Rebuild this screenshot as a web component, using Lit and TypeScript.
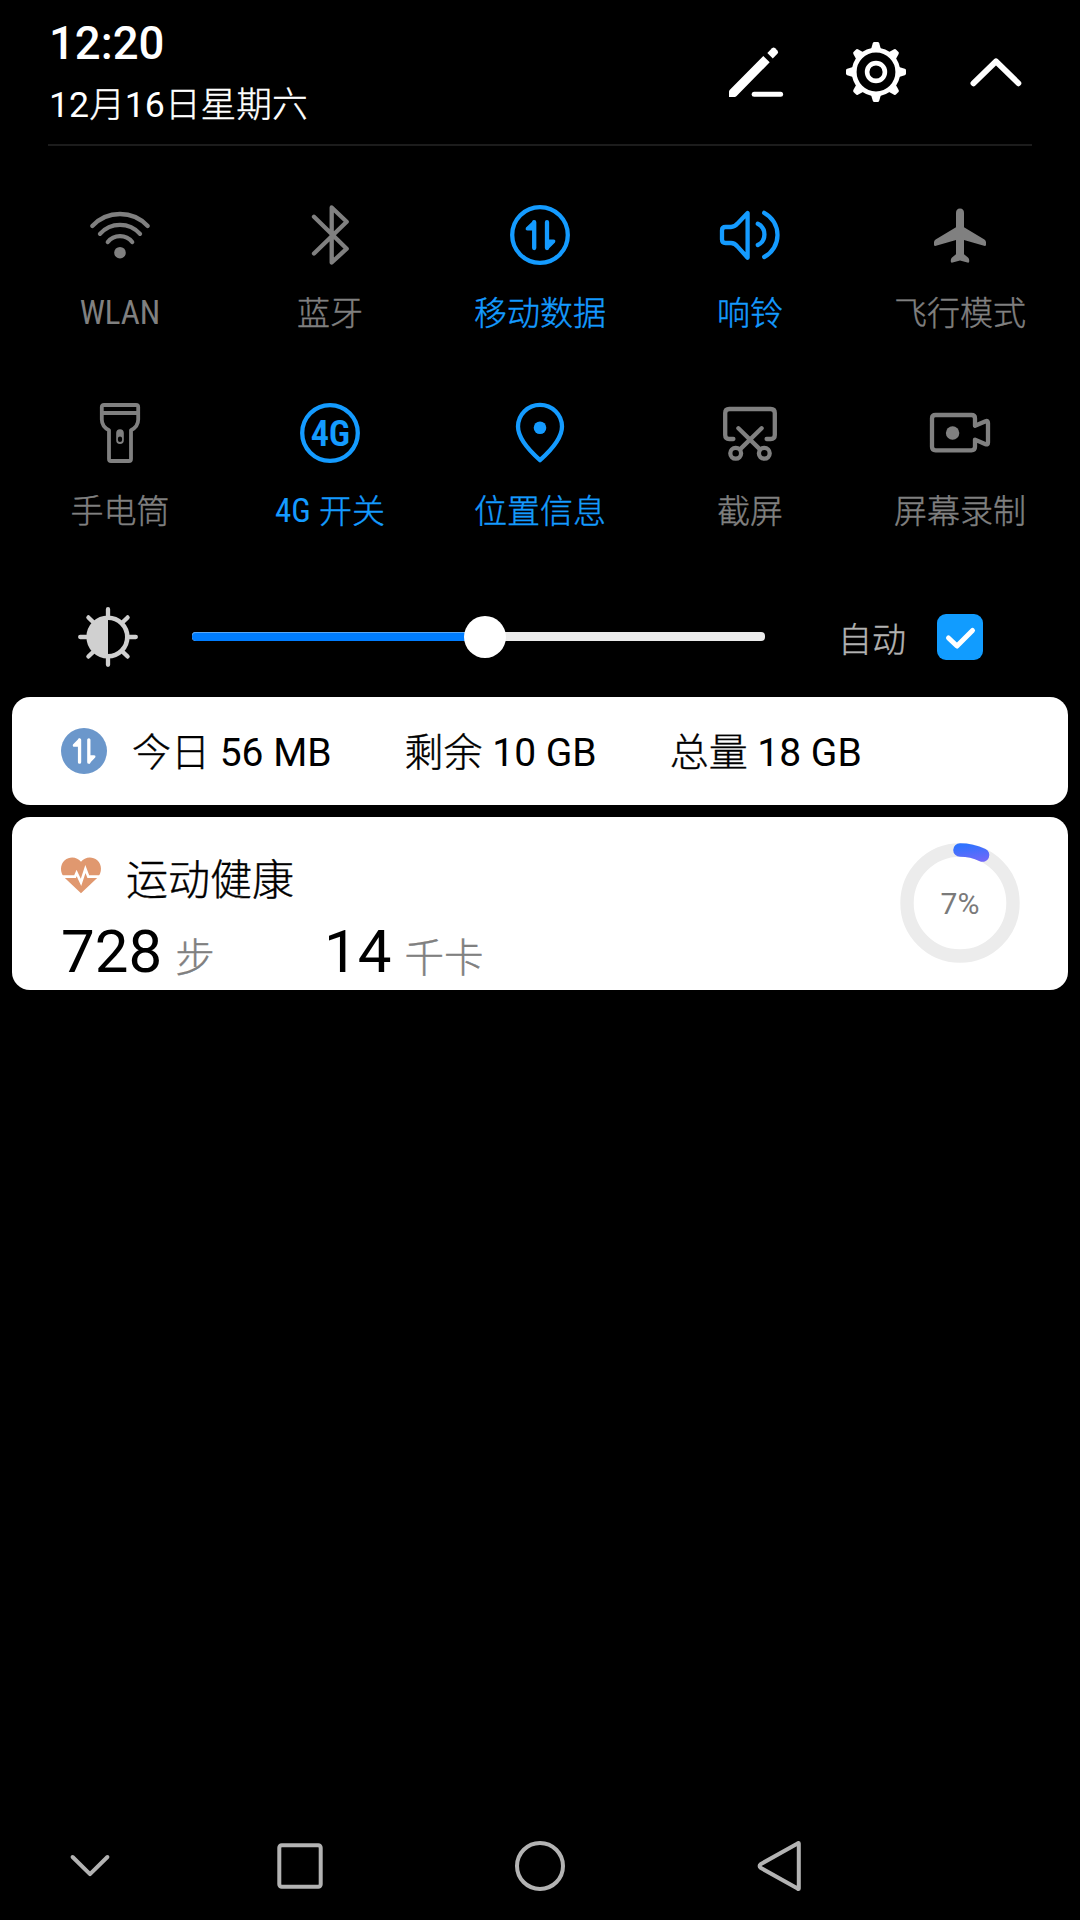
import { LitElement, html, svg, css, type SVGTemplateResult } from "lit";
import { customElement, property } from "lit/decorators.js";

const icons: Record<string, SVGTemplateResult> = {
  edit: svg`
    <path class="fill" d="M3 55V49.8Q3 48.6 3.9 47.7L37.3 14L43.7 20.3L10.6 54.1Q9.7 55 8.5 55Z"/>
    <path class="fill" d="M41.3 11L46 6.2Q47.6 4.8 49.2 6.2L51.4 8.4Q53 10 51.4 11.8L46.8 16.6Z"/>
    <path class="line" stroke-width="5" d="M28.2 52.3H54.6"/>`,
  gear: svg`
    ${[0, 45, 90, 135, 180, 225, 270, 315].map(
      (a) => svg`<path class="fill" transform="rotate(${a} 30 30)" d="M24.6 8.6L26.8 1.2Q27.2 0 28.2 0H31.8Q32.8 0 33.2 1.2L35.4 8.6Z"/>`
    )}
    <circle class="line" stroke-width="4.8" cx="30" cy="30" r="21.8"/>
    <circle class="line" stroke-width="4.6" cx="30" cy="30" r="8.9"/>`,
  collapse: svg`<path class="line" stroke-width="5.8" d="M7.4 41.3L30 19.4L52.4 41.3"/>`,
  wifi: svg`
    <path class="line" d="M2.3 21A38 38 0 0 1 57.7 21"/>
    <path class="line" d="M10 28.8A26.7 26.7 0 0 1 50 28.8"/>
    <path class="line" d="M17.8 37A15.6 15.6 0 0 1 42.2 37"/>
    <circle class="fill" cx="30" cy="47.7" r="5.8"/>`,
  bluetooth: svg`<path class="line" d="M14 11.7L46.7 43.7L31.7 57.5V2.5L46.7 16.7L14 48.5"/>`,
  data: svg`
    <circle class="line" cx="30" cy="30" r="27.8"/>
    <path class="line" d="M24.2 17.2V43M37 17.2V43"/>
    <path class="fill" d="M24 14.9L16 22.6Q14.8 25.6 17.6 25.6H24ZM37.2 45.2L45 37.4Q46.2 34.5 43.4 34.5H37.2Z"/>`,
  sound: svg`
    <path class="line" d="M5.6 22H11C14.2 22 15.6 20.8 17.6 18.4L27.6 8V52.8L17.6 41.6C15.6 39.2 14.2 38 11 38H5.6Q2 38 2 34.6V25.4Q2 22 5.6 22Z"/>
    <path class="line" d="M37.8 18.8A11.8 11.8 0 0 1 37.8 40"/>
    <path class="line" d="M44.2 7.8A25 25 0 0 1 44.2 52"/>`,
  plane: svg`<path class="fill" d="M30 3.6Q34 3.8 34 8V22.3L54.4 34.4Q56 35.4 56 37.2V39.4Q56 41.4 54 40.8L34 35V49.2L38 52.4Q39.2 53.4 39.2 55V56.6Q39.2 58.2 37.4 57.6L30 55.4L22.6 57.6Q20.8 58.2 20.8 56.6V55Q20.8 53.4 22 52.4L26 49.2V35L6 40.8Q4 41.4 4 39.4V37.2Q4 35.4 5.6 34.4L26 22.3V8Q26 3.8 30 3.6Z"/>`,
  torch: svg`
    <path class="line" stroke-width="3.8" d="M14 2H46Q48.2 2 48.2 4V16.5Q48.2 23.6 41 27.2V56Q41 58 39 58H21Q19 58 19 56V27.2Q11.8 23.6 11.8 16.5V4Q11.8 2 14 2ZM12 10H48"/>
    <path class="fill" fill-rule="evenodd" d="M26.2 30A3.8 3.8 0 0 1 33.8 30V37.2A3.8 3.8 0 0 1 26.2 37.2ZM30 33.4A2.1 2.1 0 0 0 27.9 35.5V37A2.1 2.1 0 0 0 32.1 37V35.5A2.1 2.1 0 0 0 30 33.4Z"/>`,
  lte: svg`
    <circle class="line" cx="30" cy="30" r="27.8"/>
    <text class="glyph" x="10.8" y="43" textLength="39.4" lengthAdjust="spacing">4G</text>`,
  pin: svg`
    <path class="line" d="M30 57.2C23 51 8 37.6 8 23.6A22 21.8 0 0 1 52 23.6C52 37.6 37 51 30 57.2Z"/>
    <circle class="fill" cx="30" cy="24.7" r="6.3"/>`,
  capture: svg`
    <path class="line" d="M13.4 36H9.3Q5.2 36 5.2 32V10Q5.2 6 9.3 6H50.7Q54.8 6 54.8 10V32Q54.8 36 50.7 36H46.6"/>
    <path class="line" d="M18.4 25.2L40 46.4M41.6 25.2L20 46.4"/>
    <circle class="line" cx="15.7" cy="50.3" r="5.4"/>
    <circle class="line" cx="44.3" cy="50.3" r="5.4"/>`,
  record: svg`
    <path class="line" d="M45 22.8V15.4Q45 12 41.4 12H5.6Q2 12 2 15.4V43.8Q2 47.3 5.6 47.3H41.4Q45 47.3 45 43.8V36.6L55.6 41.2Q58 42 58 39.6V20Q58 17.4 55.6 18.2L45 22.8"/>
    <circle class="fill" cx="22.6" cy="30" r="6.7"/>`,
  brightness: svg`
    <path class="line" d="M30 2.2V9M30 51V57.8M2.2 30H9M51 30H57.8M10.4 10.4L15.6 15.6M44.4 44.4L49.6 49.6M10.4 49.6L15.6 44.4M44.4 15.6L49.6 10.4"/>
    <circle class="line" stroke-width="4.6" cx="30" cy="30" r="19.3"/>
    <path class="fill" d="M30 10A20 20 0 0 0 30 50Z"/>`,
  usage: svg`
    <circle fill="#6b97cb" cx="30" cy="30" r="30"/>
    <path class="line" d="M24.2 15.4V44.6M36.3 15.4V44.6"/>
    <path class="fill" d="M24 13.2L15.6 21.4Q14.6 24.6 17.4 24.6H24ZM36.5 46.8L44.6 38.6Q45.8 35.4 43 35.4H36.5Z"/>`,
  heart: svg`
    <path class="fill" d="M30 56L5 32.4C-1.8 25-1.6 12.5 5.6 6.4C13-.2 24.6 1 30 8.8C35.4 1 47-.2 54.4 6.4C61.6 12.5 61.8 25 55 32.4Z"/>
    <path fill="none" stroke="#fff" stroke-width="4" d="M1 31H21L23.4 25.5L30 39.5L36.6 19.5L41 31H59"/>`,
  down: svg`<path class="line" stroke-width="4" d="M12.6 21L30 38.2L47.4 21"/>`,
  square: svg`<rect class="line" stroke-width="4" x="9.3" y="9.3" width="41.4" height="41.4" rx="2.4"/>`,
  circle: svg`<circle class="line" stroke-width="4" cx="30" cy="30" r="23"/>`,
  back: svg`<path class="line" stroke-width="4" d="M48.8 7.6V52.4Q48.8 53.6 47.6 52.6L10.6 31.8Q8.6 30 10.6 28.2L47.6 7.4Q48.8 6.4 48.8 7.6Z"/>`,
};

/* Splits a string so that Chinese runs can be set in a lighter weight than the Latin ones. */
const mixed = (text: string) =>
  text
    .split(/([\u4e00-\u9fff]+)/)
    .filter((s) => s)
    .map((s) => (/[\u4e00-\u9fff]/.test(s) ? html`<span class="han">${s}</span>` : s));

const hanStyle = css`
  .han { font-family: "Noto Sans CJK SC Light", "Noto Sans CJK SC", sans-serif; font-weight: 300; line-height: 1;
    -webkit-text-stroke: 0.4px currentColor; }
`;

@customElement("ui-icon")
class UiIcon extends LitElement {
  @property() name = "";
  static styles = css`
    :host { display: block; width: 60px; height: 60px; flex: none; }
    svg { display: block; width: 100%; height: 100%; overflow: visible; }
    .line { fill: none; stroke: currentColor; stroke-linecap: round; stroke-linejoin: round; }
    .line:not([stroke-width]) { stroke-width: 4.3px; }
    .fill { fill: currentColor; }
    .glyph { fill: currentColor; font-family: "Roboto Condensed", Roboto, sans-serif; font-stretch: 75%;
      font-weight: 600; font-size: 36.5px; }
  `;
  render() {
    return html`<svg viewBox="0 0 60 60" aria-hidden="true">${icons[this.name]}</svg>`;
  }
}

interface Tile { icon: string; label: string; latin?: string; on?: boolean; }

@customElement("quick-tile")
class QuickTile extends LitElement {
  @property({ attribute: false }) tile!: Tile;
  static styles = [hanStyle, css`
    :host { display: flex; flex-direction: column; align-items: center; gap: 30px; height: 198px; color: #808080; }
    :host([on]) { color: #149bff; }
    .label { height: 37px; line-height: 37px; font-size: 33px; white-space: pre; }
    .latin { font-family: "Roboto Condensed", Roboto, sans-serif; font-stretch: 75%; line-height: 1; vertical-align: 1px; }
  `];
  render() {
    const t = this.tile;
    return html`<ui-icon .name=${t.icon}></ui-icon>
      <div class="label">${t.latin ? html`<span class="latin">${t.latin}</span>` : ""}${mixed(t.label)}</div>`;
  }
}

@customElement("progress-ring")
class ProgressRing extends LitElement {
  @property({ type: Number }) value = 0;
  static styles = css`
    :host { display: block; width: 120px; height: 120px; }
    .track { fill: none; stroke: #ececec; stroke-width: 13.4px; }
    .arc { fill: none; stroke: url(#g); stroke-width: 13.6px; stroke-linecap: round; }
    .value { fill: #7a7a7a; font: 400 30px Roboto, sans-serif; text-anchor: middle; }
  `;
  render() {
    const a = (this.value / 100) * 2 * Math.PI;
    const r = 53;
    return html`<svg width="120" height="120" viewBox="0 0 120 120">
      <defs><linearGradient id="g" gradientUnits="userSpaceOnUse" x1="70" y1="1" x2="73" y2="20">
        <stop offset="0" stop-color="#2f73ff"/><stop offset="1" stop-color="#7268f8"/>
      </linearGradient></defs>
      <circle class="track" cx="60" cy="60" r=${r}></circle>
      <path class="arc" d="M60 ${60 - r}A${r} ${r} 0 0 1 ${60 + r * Math.sin(a)} ${60 - r * Math.cos(a)}"></path>
      <text class="value" x="60" y="71">${this.value}%</text>
    </svg>`;
  }
}

@customElement("app-root")
class AppRoot extends LitElement {
  tiles: Tile[] = [
    { icon: "wifi", label: "", latin: "WLAN" },
    { icon: "bluetooth", label: "蓝牙" },
    { icon: "data", label: "移动数据", on: true },
    { icon: "sound", label: "响铃", on: true },
    { icon: "plane", label: "飞行模式" },
    { icon: "torch", label: "手电筒" },
    { icon: "lte", label: " 开关", latin: "4G", on: true },
    { icon: "pin", label: "位置信息", on: true },
    { icon: "capture", label: "截屏" },
    { icon: "record", label: "屏幕录制" },
  ];
  usage = ["今日 56 MB", "剩余 10 GB", "总量 18 GB"];
  brightness = 51.1;

  static styles = [hanStyle, css`
    :host { display: flex; flex-direction: column; width: 1080px; height: 1920px; background: #000; color: #fff;
      font-family: Roboto, "Noto Sans CJK SC", sans-serif; overflow: hidden; }
    * { box-sizing: border-box; }
    header { display: flex; justify-content: space-between; height: 146px; margin: 0 48px; padding: 16px 6px 0 0;
      border-bottom: 2px solid #1c1c1c; flex: none; }
    .time { font-size: 45.5px; font-weight: 500; height: 55px; line-height: 56px; padding-left: 1px; }
    .date { font-size: 35.7px; height: 42px; line-height: 42px; margin-top: 13px; padding-left: 1px; }
    .actions { display: flex; gap: 60px; padding-top: 26px; }
    .tiles { display: grid; grid-template-columns: repeat(5, 210px); justify-content: center; padding-top: 59px; }
    .bright { display: flex; align-items: center; height: 72px; padding-left: 78px; color: #d0d0d0; }
    .slider { position: relative; width: 573px; height: 9px; margin: 0 0 1px 54px; border-radius: 4px; background: #ebebeb; }
    .done { height: 100%; border-radius: 4px 0 0 4px; background: #007dff; box-shadow: inset 0 1px #59a9f8; }
    .thumb { position: absolute; top: -16px; width: 42px; height: 42px; margin-left: -21px; border-radius: 50%; background: #fff; }
    .auto { margin-left: 73px; width: 99px; font-size: 34px; height: 40px; line-height: 40px; padding-top: 3px; color: #b3b3b3; }
    .check { width: 46px; height: 46px; border-radius: 9px; background: #119cff; }
    .check svg { display: block; }
    .cards { display: flex; flex-direction: column; gap: 12px; margin: 24px 12px 0; color: #000; }
    .card { background: #fff; border-radius: 18px; overflow: hidden; }
    .usage { display: flex; align-items: center; height: 108px; padding-left: 49px; font-size: 39px; line-height: 46px; }
    .usage ui-icon { width: 46px; height: 46px; color: #fff; margin-right: 25px; }
    .entry { height: 46px; margin-right: 73px; padding-top: 2px; }
    .health { display: flex; justify-content: space-between; height: 173px; padding: 26px 48px 0 49px; }
    .title { display: flex; align-items: center; font-size: 42px; height: 74px; }
    .title ui-icon { width: 40px; height: 40px; margin: -8px 25px 0 0; color: #e0986f; }
    .title .han { margin-top: -7px; }
    .stats { display: flex; align-items: baseline; line-height: 70px; }
    .num { font-size: 60px; }
    .unit { font-size: 39.5px; color: #808080; margin-left: 13px; }
    .steps { width: 263px; }
    nav { display: grid; grid-template-columns: 180px repeat(3, 240px); justify-items: center; align-items: center;
      height: 108px; margin-top: auto; color: #b3b3b3; }
  `];

  render() {
    return html`
      <header>
        <div>
          <div class="time">12:20</div>
          <div class="date">${mixed("12月16日星期六")}</div>
        </div>
        <div class="actions">
          <ui-icon name="edit"></ui-icon>
          <ui-icon name="gear"></ui-icon>
          <ui-icon name="collapse"></ui-icon>
        </div>
      </header>
      <section class="tiles">
        ${this.tiles.map((t) => html`<quick-tile .tile=${t} ?on=${t.on}></quick-tile>`)}
      </section>
      <section class="bright">
        <ui-icon name="brightness"></ui-icon>
        <div class="slider">
          <div class="done" style="width:${this.brightness}%"></div>
          <div class="thumb" style="left:${this.brightness}%"></div>
        </div>
        <div class="auto">${mixed("自动")}</div>
        <div class="check">
          <svg width="46" height="46" viewBox="0 0 46 46" fill="none" stroke="#fff" stroke-width="5"
            stroke-linecap="round" stroke-linejoin="round"><path d="M11.5 24L20 32L35.5 16.5"/></svg>
        </div>
      </section>
      <section class="cards">
        <div class="card usage">
          <ui-icon name="usage"></ui-icon>
          ${this.usage.map((u) => html`<div class="entry">${mixed(u)}</div>`)}
        </div>
        <div class="card health">
          <div>
            <div class="title"><ui-icon name="heart"></ui-icon>${mixed("运动健康")}</div>
            <div class="stats">
              <div class="steps"><span class="num">728</span><span class="unit">${mixed("步")}</span></div>
              <div><span class="num">14</span><span class="unit">${mixed("千卡")}</span></div>
            </div>
          </div>
          <progress-ring value="7"></progress-ring>
        </div>
      </section>
      <nav>
        ${["down", "square", "circle", "back"].map((n) => html`<ui-icon name=${n}></ui-icon>`)}
      </nav>`;
  }
}
